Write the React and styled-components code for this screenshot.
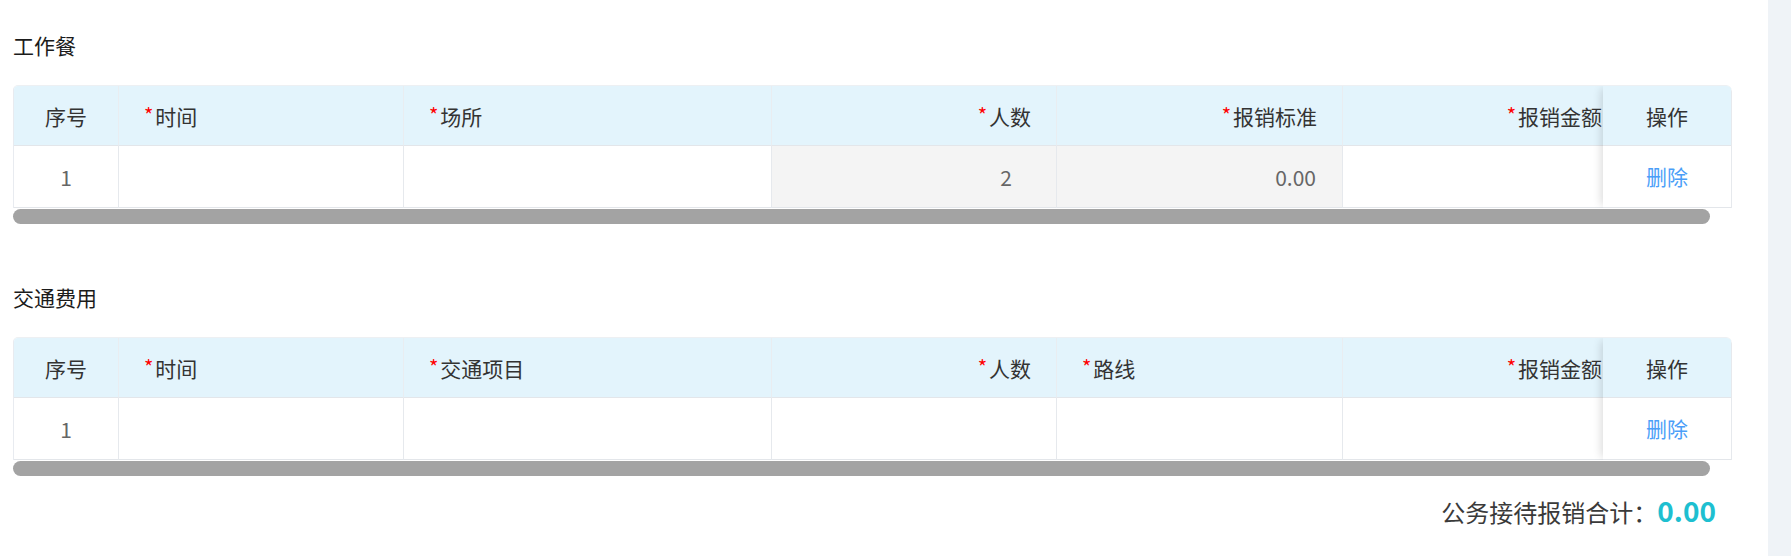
import React from "react";
import styled, { createGlobalStyle } from "styled-components";

const Global = createGlobalStyle`
  html, body { margin: 0; padding: 0; background: #fff; }
  body { font-family: "Noto Sans CJK SC", "Noto Sans", sans-serif; }
`;

const Shell = styled.div`
  display: flex;
  width: 1791px;
  height: 556px;
  overflow: hidden;
`;

const Main = styled.main`
  flex: 1;
  min-width: 0;
  background: #fff;
  padding: 31px 36px 0 13px;
`;

const Gutter = styled.aside`
  flex: none;
  width: 23px;
  background: #eff3f7;
`;

const Section = styled.section`
  margin-bottom: ${(p) => p.$gap || 0}px;
`;

const Title = styled.h3`
  margin: 0 0 26px 0;
  font-size: 21px;
  line-height: 28px;
  font-weight: 400;
  color: #1b1b1b;
`;

const TableBox = styled.div`
  display: flex;
  flex-direction: column;
`;

const TableRow = styled.div`
  display: flex;
  border-left: 1px solid #e8ebf0;
  border-top: 1px solid #edf0f3;
  border-radius: 5px 6px 0 0;
  overflow: hidden;
`;

const Viewport = styled.div`
  flex: 1;
  min-width: 0;
  overflow: hidden;
`;

const Grid = styled.div`
  display: grid;
  grid-template-columns: 105px 285px 368px 285px 286px 275px;
  width: max-content;
`;

const Head = styled.div`
  height: 60px;
  box-sizing: border-box;
  background: #e3f4fc;
  border-right: 1px solid #e9edf1;
  border-bottom: 1px solid #e3e6ea;
  display: flex;
  align-items: center;
  justify-content: ${(p) => (p.$align === "right" ? "flex-end" : p.$align === "center" ? "center" : "flex-start")};
  padding: ${(p) => (p.$align === "center" ? "0" : p.$last ? "0 15px 0 25px" : "0 25px")};
  font-size: 21px;
  color: #333;
  white-space: nowrap;
`;

const Star = styled.span`
  color: #f00;
  font-size: 20px;
  margin-right: 2px;
  position: relative;
  top: -1px;
`;

const Cell = styled.div`
  height: 62px;
  box-sizing: border-box;
  background: ${(p) => (p.$muted ? "#f4f4f4" : "#fff")};
  border-right: 1px solid #e6e9ed;
  border-bottom: 1px solid #e3e6ea;
  display: flex;
  align-items: center;
  justify-content: ${(p) => (p.$align === "right" ? "flex-end" : p.$align === "center" ? "center" : "flex-start")};
  padding-right: ${(p) => p.$pr || 0}px;
  font-size: 21px;
  color: #666;
`;

const FixedCol = styled.div`
  width: 129px;
  flex: none;
  display: flex;
  flex-direction: column;
  position: relative;
  z-index: 1;
  background: #fff;
  box-shadow: -5px 0 9px -3px rgba(0, 0, 0, 0.14);
  border-right: 1px solid #e6e9ed;
  border-top-right-radius: 6px;
  box-sizing: border-box;
`;

const FixedHead = styled(Head)`
  border-right: none;
  justify-content: center;
  padding: 0;
`;

const FixedCell = styled(Cell)`
  border-right: none;
  justify-content: center;
  padding-bottom: 2px;
`;

const DeleteLink = styled.a`
  color: #4a9ef8;
  font-size: 21px;
  cursor: pointer;
  text-decoration: none;
`;

const ScrollTrack = styled.div`
  height: 16px;
  padding-top: 1px;
  box-sizing: border-box;
  display: flex;
`;

const Thumb = styled.div`
  flex: 1;
  margin-right: 22px;
  height: 15px;
  border-radius: 8px;
  background: #a3a3a3;
`;

const Total = styled.div`
  margin-top: 16px;
  display: flex;
  justify-content: flex-end;
  align-items: baseline;
  padding-right: 16px;
  line-height: 36px;
`;

const TotalLabel = styled.span`
  font-size: 24px;
  color: #3a3a3a;
`;

const TotalValue = styled.span`
  font-size: 28px;
  font-weight: 700;
  color: #1ebfd0;
`;

const meal = {
  title: "工作餐",
  heads: [
    { label: "序号", align: "center" },
    { label: "时间", req: true },
    { label: "场所", req: true },
    { label: "人数", req: true, align: "right" },
    { label: "报销标准", req: true, align: "right" },
    { label: "报销金额", req: true, align: "right" },
  ],
  cells: [
    { v: "1", align: "center" },
    {},
    {},
    { v: "2", align: "right", muted: true, pr: 44 },
    { v: "0.00", align: "right", muted: true, pr: 26 },
    {},
  ],
};

const traffic = {
  title: "交通费用",
  heads: [
    { label: "序号", align: "center" },
    { label: "时间", req: true },
    { label: "交通项目", req: true },
    { label: "人数", req: true, align: "right" },
    { label: "路线", req: true },
    { label: "报销金额", req: true, align: "right" },
  ],
  cells: [{ v: "1", align: "center" }, {}, {}, {}, {}, {}],
};

function EditTable({ data }) {
  return (
    <TableBox>
      <TableRow>
        <Viewport>
          <Grid>
            {data.heads.map((h, i) => (
              <Head key={i} $align={h.align} $last={i === data.heads.length - 1}>
                {h.req && <Star>*</Star>}
                {h.label}
              </Head>
            ))}
            {data.cells.map((c, i) => (
              <Cell key={i} $align={c.align} $muted={c.muted} $pr={c.pr}>
                {c.v}
              </Cell>
            ))}
          </Grid>
        </Viewport>
        <FixedCol>
          <FixedHead>操作</FixedHead>
          <FixedCell>
            <DeleteLink>删除</DeleteLink>
          </FixedCell>
        </FixedCol>
      </TableRow>
      <ScrollTrack>
        <Thumb />
      </ScrollTrack>
    </TableBox>
  );
}

export default function App() {
  return (
    <Shell>
      <Global />
      <Main>
        <Section $gap={59}>
          <Title>{meal.title}</Title>
          <EditTable data={meal} />
        </Section>
        <Section>
          <Title>{traffic.title}</Title>
          <EditTable data={traffic} />
        </Section>
        <Total>
          <TotalLabel>公务接待报销合计：</TotalLabel>
          <TotalValue>0.00</TotalValue>
        </Total>
      </Main>
      <Gutter />
    </Shell>
  );
}
